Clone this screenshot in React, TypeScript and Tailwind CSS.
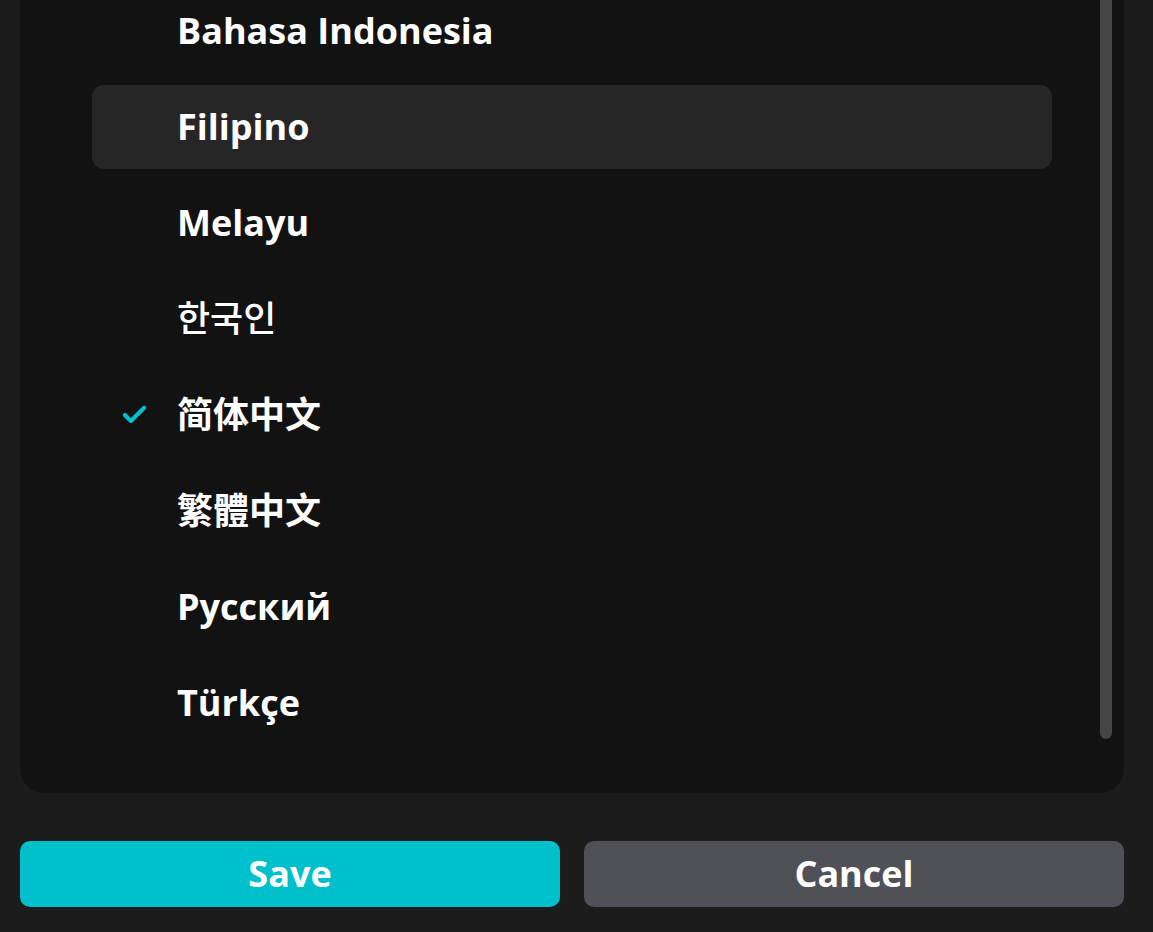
import { Check } from "lucide-react";

const languages = [
  { label: "Bahasa Indonesia" },
  { label: "Filipino", hover: true },
  { label: "Melayu" },
  { label: "한국인", light: true },
  { label: "简体中文", selected: true },
  { label: "繁體中文" },
  { label: "Русский" },
  { label: "Türkçe" },
];

const font = {
  fontFamily: '"Open Sans", "Noto Sans CJK SC", "Noto Sans CJK KR", sans-serif',
};

export default function App() {
  return (
    <div
      className="h-[932px] w-full overflow-hidden bg-[#1c1c1c] pl-5 pr-[29px] text-white"
      style={font}
    >
      <div className="flex flex-col -mt-[30px]">
        <div className="flex rounded-b-[24px] bg-[#121212] pl-[72px] pr-3">
          <div className="flex flex-1 flex-col gap-3 pt-[19px] pb-12 pr-12">
            {languages.map((l) => (
              <div
                key={l.label}
                className={`relative flex h-[84px] items-center rounded-xl pl-[85px] ${
                  l.hover ? "bg-[#262626]" : ""
                }`}
              >
                {l.selected && (
                  <Check
                    className="absolute left-[28px] top-1/2 -translate-y-1/2 text-[#00c0cc]"
                    size={29}
                    strokeWidth={3.4}
                  />
                )}
                <span
                  className={`text-[36px] leading-none ${
                    l.light ? "font-medium" : "font-bold"
                  }`}
                >
                  {l.label}
                </span>
              </div>
            ))}
          </div>
          <div className="mb-[54px] w-3 rounded-b-full bg-[#454545]" />
        </div>

        <div className="mt-12 grid grid-cols-2 gap-6">
          <button className="h-[66px] rounded-[10px] bg-[#00c0cc] text-[36px] font-bold">
            Save
          </button>
          <button className="h-[66px] rounded-[10px] bg-[#505157] text-[36px] font-bold">
            Cancel
          </button>
        </div>
      </div>
    </div>
  );
}
